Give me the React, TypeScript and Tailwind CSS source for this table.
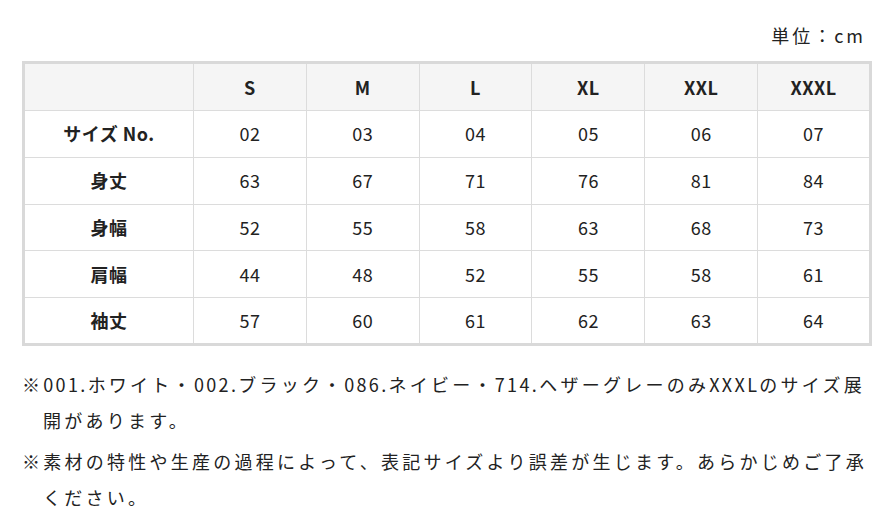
const sizes = ["S", "M", "L", "XL", "XXL", "XXXL"];

const rows: { label: string; values: string[] }[] = [
  { label: "サイズ No.", values: ["02", "03", "04", "05", "06", "07"] },
  { label: "身丈", values: ["63", "67", "71", "76", "81", "84"] },
  { label: "身幅", values: ["52", "55", "58", "63", "68", "73"] },
  { label: "肩幅", values: ["44", "48", "52", "55", "58", "61"] },
  { label: "袖丈", values: ["57", "60", "61", "62", "63", "64"] },
];

// segments: plain strings are kana/kanji, {latin} runs sit a little tighter
type Seg = string | { latin: string };

const notes: Seg[][] = [
  [
    "※",
    { latin: "001." },
    "ホワイト・",
    { latin: "002." },
    "ブラック・",
    { latin: "086." },
    "ネイビー・",
    { latin: "714." },
    "ヘザーグレーのみ",
    { latin: "XXXL" },
    "のサイズ展",
    "開があります。",
  ],
  [
    "※素材の特性や生産の過程によって、表記サイズより誤差が生じます。あらかじめご了承",
    "ください。",
  ],
];

function Note({ segs }: { segs: Seg[] }) {
  return (
    <p className="pl-[21px] -indent-[21px]">
      {segs.map((s, i) =>
        typeof s === "string" ? (
          <span key={i}>{s}</span>
        ) : (
          <span key={i} className="tracking-[2.35px]">
            {s.latin}
          </span>
        )
      )}
    </p>
  );
}

export default function App() {
  return (
    <div className="min-h-screen bg-white pl-[22px] pr-[15px] pt-[17px] font-['Noto_Sans_CJK_JP',sans-serif] text-[#222]">
      <p className="pr-[6px] text-right text-[18px] leading-[36px] tracking-[3px]">
        単位：cm
      </p>

      <table className="mt-[8px] w-[850px] table-fixed border-collapse border-[3px] border-[#d9d9d9] text-[18px] tracking-[0.5px]">
        <colgroup>
          <col className="w-[170px]" />
          {sizes.map((s) => (
            <col key={s} />
          ))}
        </colgroup>
        <thead>
          <tr className="h-[48px] bg-[#f5f5f5]">
            <th className="border border-[#dcdcdc]" />
            {sizes.map((s) => (
              <th key={s} className="border border-[#dcdcdc] text-center font-bold">
                {s}
              </th>
            ))}
          </tr>
        </thead>
        <tbody>
          {rows.map((row) => (
            <tr key={row.label} className="h-[46.8px]">
              <th className="border border-[#dcdcdc] text-center font-bold">
                {row.label}
              </th>
              {row.values.map((v, i) => (
                <td key={i} className="border border-[#dcdcdc] text-center">
                  {v}
                </td>
              ))}
            </tr>
          ))}
        </tbody>
      </table>

      <div className="mt-[20px] flex w-[850px] flex-col gap-[5px] text-[18px] leading-[36px] tracking-[3.25px]">
        {notes.map((segs, i) => (
          <Note key={i} segs={segs} />
        ))}
      </div>
    </div>
  );
}
